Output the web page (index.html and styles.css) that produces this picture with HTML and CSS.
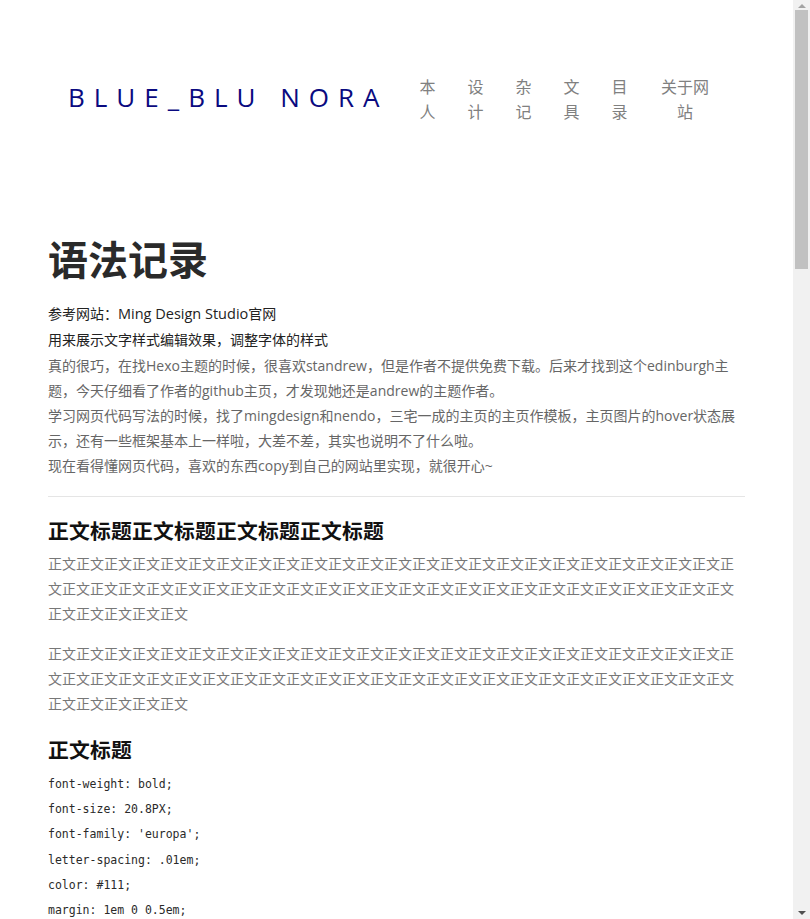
FILE: index.html
```html
<!DOCTYPE html>
<html lang="zh-CN">
<head>
<meta charset="utf-8">
<title>语法记录</title>
<link rel="stylesheet" href="styles.css">
</head>
<body>
<div class="page">
  <header class="site-header">
    <a class="logo" href="#">BLUE_BLU NORA</a>
    <nav class="nav">
      <a class="nav-item" href="#">本人</a>
      <a class="nav-item" href="#">设计</a>
      <a class="nav-item" href="#">杂记</a>
      <a class="nav-item" href="#">文具</a>
      <a class="nav-item" href="#">目录</a>
      <a class="nav-item nav-item-wide" href="#">关于网站</a>
    </nav>
  </header>
  <main class="post">
    <h1 class="post-title">语法记录</h1>
    <p class="lead">参考网站：<a class="ref-link" href="#">Ming Design Studio</a>官网</p>
    <p class="lead">用来展示文字样式编辑效果，调整字体的样式</p>
    <p class="text">真的很巧，在找Hexo主题的时候，很喜欢standrew，但是作者不提供免费下载。后来才找到这个edinburgh主题，今天仔细看了作者的github主页，才发现她还是andrew的主题作者。<br>学习网页代码写法的时候，找了mingdesign和nendo，三宅一成的主页的主页作模板，主页图片的hover状态展示，还有一些框架基本上一样啦，大差不差，其实也说明不了什么啦。<br>现在看得懂网页代码，喜欢的东西copy到自己的网站里实现，就很开心~</p>
    <hr class="divider">
    <h2 class="section-title">正文标题正文标题正文标题正文标题</h2>
    <p class="body-text">正文正文正文正文正文正文正文正文正文正文正文正文正文正文正文正文正文正文正文正文正文正文正文正文正文正文正文正文正文正文正文正文正文正文正文正文正文正文正文正文正文正文正文正文正文正文正文正文正文正文正文正文正文正文</p>
    <p class="body-text">正文正文正文正文正文正文正文正文正文正文正文正文正文正文正文正文正文正文正文正文正文正文正文正文正文正文正文正文正文正文正文正文正文正文正文正文正文正文正文正文正文正文正文正文正文正文正文正文正文正文正文正文正文正文</p>
    <h2 class="section-title">正文标题</h2>
    <div class="code-list">
      <code class="code-line">font-weight: bold;</code>
      <code class="code-line">font-size: 20.8PX;</code>
      <code class="code-line">font-family: 'europa';</code>
      <code class="code-line">letter-spacing: .01em;</code>
      <code class="code-line">color: #111;</code>
      <code class="code-line">margin: 1em 0 0.5em;</code>
    </div>
  </main>
</div>
<div class="scrollbar" aria-hidden="true">
  <span class="scroll-arrow scroll-up"></span>
  <span class="scroll-thumb"></span>
  <span class="scroll-arrow scroll-down"></span>
</div>
</body>
</html>
```
FILE: styles.css
```css
* { box-sizing: border-box; }
html, body { margin: 0; padding: 0; }
body {
  background: #fff;
  font-family: "Open Sans", "Noto Sans CJK SC", sans-serif;
  color: #666;
}
a { text-decoration: none; color: inherit; }

.page { width: 793px; }

.site-header {
  display: flex;
  align-items: center;
  padding: 74px 0 0 68px;
  height: 50px;
  box-sizing: content-box;
}
.logo {
  font-family: "Open Sans", sans-serif;
  font-size: 26px;
  letter-spacing: 9px;
  color: #0a0a80;
  margin-right: 31px;
  white-space: nowrap;
  position: relative;
  top: -2px;
}
.nav {
  display: flex;
  gap: 32px;
  font-family: "Noto Sans CJK SC", sans-serif;
  font-size: 16px;
  line-height: 25px;
  color: #808080;
}
.nav-item {
  width: 1em;
  text-align: center;
}
.nav-item-wide { width: 3.2em; }

.post {
  padding: 110px 48px 1900px;
}
.post-title {
  margin: 0 0 19px;
  font-size: 40px;
  line-height: 48px;
  font-weight: 700;
  color: #2a2a2a;
  font-family: "Noto Sans CJK SC", sans-serif;
}
.lead {
  margin: 0;
  font-size: 14px;
  line-height: 26px;
  color: #222;
}
.ref-link { font-size: 14.5px; color: #222; }
.text {
  margin: 0;
  font-size: 14px;
  line-height: 25px;
  color: #666;
}
.divider {
  border: 0;
  border-top: 1px solid #e5e5e5;
  margin: 18px 0 19px;
}
.section-title {
  font-family: "Noto Sans CJK SC", sans-serif;
  font-size: 20.8px;
  font-weight: 700;
  letter-spacing: .01em;
  color: #111;
  line-height: 28px;
  margin: 0 0 7px;
}
.body-text {
  margin: 0 0 15px;
  font-size: 14px;
  line-height: 25px;
  color: #777;
  word-break: break-all;
}
.body-text + .section-title { margin-top: 19px; }
.code-list {
  display: flex;
  flex-direction: column;
  margin-top: 9px;
}
.code-line {
  font-family: "DejaVu Sans Mono", monospace;
  font-size: 11.5px;
  line-height: 25.2px;
  color: #2a2a2a;
}

/* browser scrollbar, as shown in the reference */
.scrollbar {
  position: fixed;
  top: 0;
  right: 0;
  width: 17px;
  height: 100vh;
  background: #f1f1f1;
  display: flex;
  flex-direction: column;
  align-items: center;
}
.scroll-arrow {
  width: 0;
  height: 0;
  border-left: 4px solid transparent;
  border-right: 4px solid transparent;
}
.scroll-up {
  margin-top: 4px;
  border-bottom: 4px solid #a3a3a3;
}
.scroll-thumb {
  width: 13px;
  height: 259px;
  margin-top: 2px;
  background: #c1c1c1;
}
.scroll-down {
  margin-top: auto;
  margin-bottom: 4px;
  border-top: 4px solid #505050;
}
```
